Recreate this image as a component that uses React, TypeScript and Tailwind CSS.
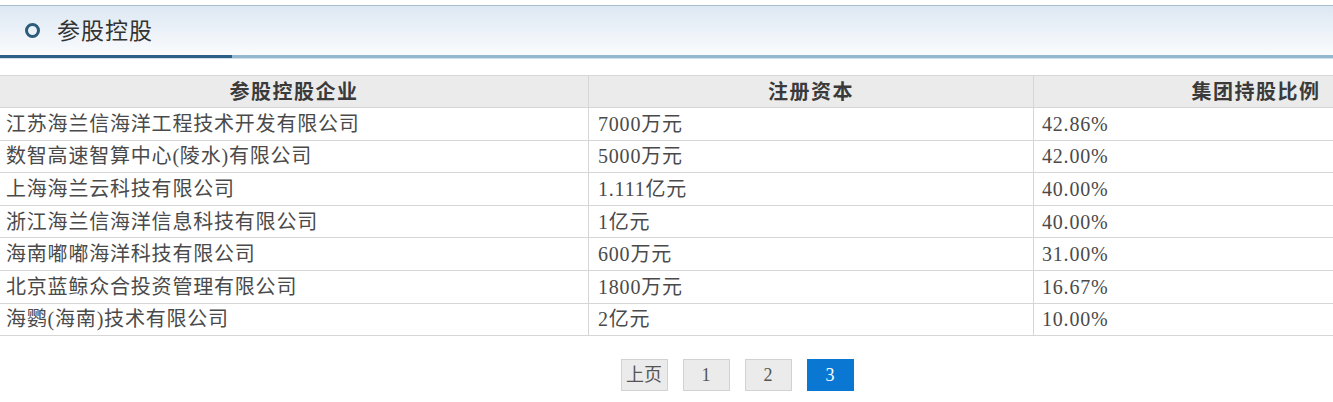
import React from 'react';

// Equity holdings table (参股控股)
const rows: { name: string; capital: string; ratio: string }[] = [
  { name: '江苏海兰信海洋工程技术开发有限公司', capital: '7000万元', ratio: '42.86%' },
  { name: '数智高速智算中心(陵水)有限公司', capital: '5000万元', ratio: '42.00%' },
  { name: '上海海兰云科技有限公司', capital: '1.111亿元', ratio: '40.00%' },
  { name: '浙江海兰信海洋信息科技有限公司', capital: '1亿元', ratio: '40.00%' },
  { name: '海南嘟嘟海洋科技有限公司', capital: '600万元', ratio: '31.00%' },
  { name: '北京蓝鲸众合投资管理有限公司', capital: '1800万元', ratio: '16.67%' },
  { name: '海鹦(海南)技术有限公司', capital: '2亿元', ratio: '10.00%' },
];

const pages = ['上页', '1', '2', '3'];

const bodyFont = "font-['Liberation_Serif','Noto_Sans_CJK_SC',serif]";

export default function App() {
  return (
    <div className="w-full overflow-hidden bg-white">
      <div className="w-[1478px] pt-[5px]">
        {/* ── Section title bar ─────────────────────────── */}
        <div className="border-t border-[#a9bccb] bg-gradient-to-b from-[#dde7f3] to-[#fafcfd] h-[50px] flex items-center pl-[25px] gap-[17px]">
          <span className="w-[15px] h-[15px] rounded-full border-[3px] border-[#2b5c7c]" />
          <span className="font-['Noto_Sans_CJK_SC',sans-serif] text-[23px] tracking-[1px] text-[#333] leading-none -mt-[2px]">
            参股控股
          </span>
        </div>
        <div className="flex h-[3px]">
          <div className="w-[232px] bg-[#2d6086]" />
          <div className="flex-1 bg-[#93b8cf]" />
        </div>
        <div className="h-px bg-[#cfe0ea]" />

        {/* ── Table ─────────────────────────────────────── */}
        <div className={`mt-[16px] border-t border-[#d6d6d6] ${bodyFont}`}>
          <div className="grid grid-cols-[588px_445px_445px] h-[32px] bg-[#ebebeb] border-b border-[#d6d6d6] text-[20px] tracking-[1.5px] font-bold text-[#3a3a3a]">
            <div className="flex items-center justify-center">参股控股企业</div>
            <div className="flex items-center justify-center border-l border-[#d6d6d6]">注册资本</div>
            <div className="flex items-center justify-center border-l border-[#d6d6d6]">集团持股比例</div>
          </div>
          {rows.map((r) => (
            <div
              key={r.name}
              className="grid grid-cols-[588px_445px_445px] h-[32.6px] border-b border-[#d6d6d6] text-[20px] tracking-[0.8px] text-[#4a4a4a]"
            >
              <div className="flex items-center pl-[6px]">{r.name}</div>
              <div className="flex items-center pl-[9px] border-l border-[#d6d6d6]">{r.capital}</div>
              <div className="flex items-center pl-[8px] border-l border-[#d6d6d6]">{r.ratio}</div>
            </div>
          ))}
        </div>

        {/* ── Pagination ────────────────────────────────── */}
        <div className={`flex justify-center gap-[15px] mt-[23px] pr-[4px] ${bodyFont}`}>
          {pages.map((p) => (
            <span
              key={p}
              className={`w-[47px] h-[32px] flex items-center justify-center border text-[18px] ${
                p === '3'
                  ? 'bg-[#0a78d2] border-[#0a78d2] text-white'
                  : 'bg-[#ebebeb] border-[#d2d2d2] text-[#555]'
              }`}
            >
              {p}
            </span>
          ))}
        </div>
      </div>
    </div>
  );
}
